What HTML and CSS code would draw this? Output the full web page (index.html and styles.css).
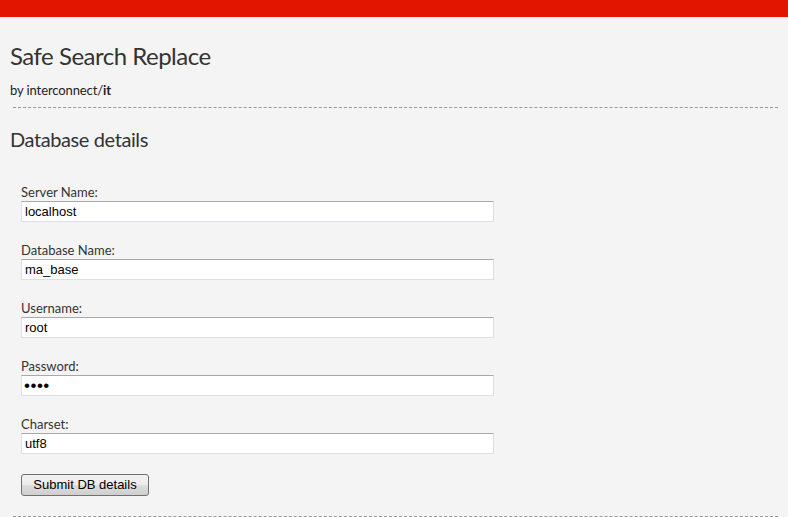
FILE: index.html
```html
<!DOCTYPE html>
<html>
<head>
<meta charset="utf-8">
<link rel="stylesheet" href="styles.css">
</head>
<body>
<div class="topbar"></div>
<div class="page">
  <header class="head">
    <h1 class="title">Safe Search Replace</h1>
    <p class="byline">by interconnect/<strong>it</strong></p>
  </header>
  <section class="section">
    <h2 class="section-title">Database details</h2>
    <form class="form">
      <div class="field">
        <label class="label">Server Name:</label>
        <input class="input" type="text" value="localhost">
      </div>
      <div class="field">
        <label class="label">Database Name:</label>
        <input class="input" type="text" value="ma_base">
      </div>
      <div class="field">
        <label class="label">Username:</label>
        <input class="input" type="text" value="root">
      </div>
      <div class="field">
        <label class="label">Password:</label>
        <input class="input input-password" type="password" value="root">
      </div>
      <div class="field">
        <label class="label">Charset:</label>
        <input class="input" type="text" value="utf8">
      </div>
      <div class="actions">
        <button class="button" type="button">Submit DB details</button>
      </div>
    </form>
  </section>
  <div class="rule bottom"></div>
</div>
</body>
</html>
```
FILE: styles.css
```css
html, body {
  margin: 0;
  padding: 0;
  background: #f4f4f4;
}
body {
  font-family: Lato, "Open Sans", sans-serif;
  color: #333;
}
.topbar {
  height: 17px;
  background: #e21500;
}
.page {
  padding: 0 10px 0 10px;
}
.head {
  padding: 24px 0 9px 0;
  border-bottom: 1px dashed #999;
  margin-left: 3px;
}
.title {
  font-size: 24px;
  font-weight: 400;
  letter-spacing: -0.5px;
  margin: 0 0 0 -3px;
  line-height: 30px;
  color: #333;
}
.byline {
  margin: 11px 0 0 -3px;
  font-size: 13px;
  line-height: 16px;
  letter-spacing: -0.1px;
  color: #222;
}
.byline strong {
  font-weight: 700;
}
.section {
  padding-top: 18px;
}
.section-title {
  font-size: 20px;
  font-weight: 400;
  letter-spacing: -0.4px;
  margin: 0;
  line-height: 26px;
  color: #333;
}
.form {
  padding: 32px 0 0 11px;
  display: flex;
  flex-direction: column;
  gap: 20px;
}
.field {
  display: flex;
  flex-direction: column;
  gap: 0;
}
.label {
  font-size: 13px;
  line-height: 17px;
  color: #333;
}
.input {
  width: 473px;
  height: 21px;
  box-sizing: border-box;
  margin: 0;
  padding: 1px 3px;
  border: 1px solid #dcdfe6;
  border-top-color: #a9a9a9;
  background: #fff;
  font-family: "Liberation Sans", Arial, sans-serif;
  font-size: 13px;
  color: #000;
}
.input-password {
  font-size: 17px;
  letter-spacing: 0.5px;
  padding-left: 2px;
}
.actions {
  margin-top: -1px;
}
.button {
  width: 128px;
  height: 22px;
  margin: 0;
  padding: 0;
  border: 1px solid #707070;
  border-radius: 3px;
  background: linear-gradient(#f2f2f2, #ebebeb 50%, #dddddd 51%, #cfcfcf);
  font-family: "Liberation Sans", Arial, sans-serif;
  font-size: 13px;
  color: #000;
}
.rule {
  border-top: 1px dashed #999;
  margin-left: 3px;
}
.bottom {
  margin-top: 20px;
}
```
